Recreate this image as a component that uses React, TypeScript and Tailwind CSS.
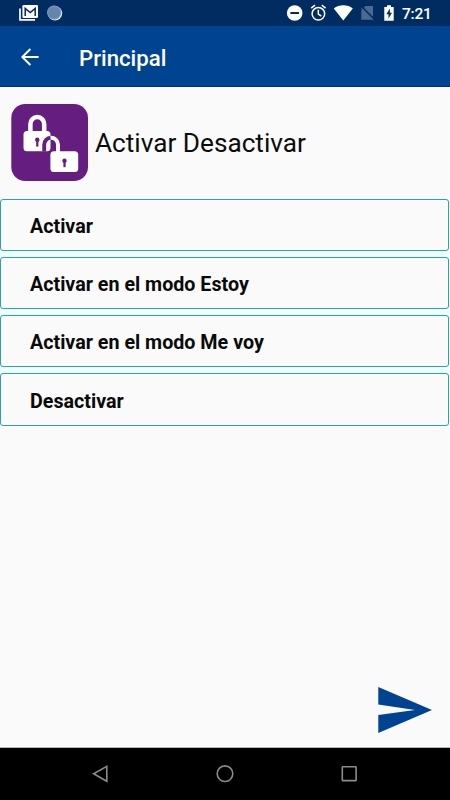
import React from "react";

const options = ["Activar", "Activar en el modo Estoy", "Activar en el modo Me voy", "Desactivar"];

function StatusBar() {
  return (
    <div className="h-[26px] shrink-0 bg-[#012c61]">
      <svg width="450" height="26" viewBox="0 0 450 26" className="block">
        <path d="M20 8.5V19.9H35" fill="none" stroke="#fff" strokeWidth="1.7" />
        <rect x="22.4" y="5" width="15.6" height="13" rx="1.2" fill="#fff" />
        <path d="M25.2 16V8.4L30.2 12.6L35.2 8.4V16" fill="none" stroke="#012c61" strokeWidth="1.5" />
        <circle cx="55" cy="13.3" r="7.2" fill="#d9e6f2" />
        <circle cx="54.1" cy="12.5" r="7" fill="#6585ab" />
        <circle cx="54.2" cy="12.6" r="6.5" fill="none" stroke="#9cb4cf" strokeWidth="1" strokeDasharray="1 1" />
        <circle cx="294.7" cy="13" r="7.8" fill="#fff" />
        <rect x="290.4" y="12" width="8.6" height="2" fill="#012c61" />
        <g fill="none" stroke="#fff" strokeWidth="1.5">
          <circle cx="318.4" cy="13.8" r="6.3" />
          <path d="M311.2 8.2L315 5.1M325.6 8.2L321.8 5.1M318.3 9.8V14.2L321.3 16" />
        </g>
        <path d="M343.3 20.6L333.8 8.6C339 4.2 347.6 4.2 352.8 8.6Z" fill="#fff" />
        <path d="M365.6 6H373V19.8H361.3V10.2Z" fill="#4c6a91" />
        <path d="M361.8 6.7L374.5 19.4" stroke="#012c61" strokeWidth="1.6" />
        <path d="M361 7.8L373.5 20.4" stroke="#4c6a91" strokeWidth="1" />
        <path d="M387 5.2H391V7H393.7V20.8H384.3V7H387Z" fill="#fff" />
        <path d="M389.9 8.6L386.3 14.2H388.5V18.4L392 12.7H389.9Z" fill="#012c61" />
        <text x="402" y="19" fontSize="15.5" fontWeight="500" fill="#fff" fontFamily="Roboto, sans-serif" textLength="29.8">7:21</text>
      </svg>
    </div>
  );
}

function Padlock() {
  return (
    <svg width="77" height="77" viewBox="11 104 77 77" className="block shrink-0">
      <rect x="11.3" y="104" width="76.7" height="77" rx="14" fill="#661d80" />
      <path d="M30.4 132V124A6.9 6.9 0 0 1 44.2 124V132" fill="none" stroke="#fff" strokeWidth="4.5" />
      <rect x="23.5" y="131" width="27" height="20.3" rx="3.5" fill="#fff" />
      <path d="M44.2 151.5V144.8A7 7 0 0 1 50.9 137.6" fill="none" stroke="#661d80" strokeWidth="3.9" />
      <path d="M50.5 137.7A7 7 0 0 1 58 144.8V152" fill="none" stroke="#fff" strokeWidth="3.9" />
      <rect x="49.7" y="150.3" width="29.2" height="22.4" rx="4" fill="#661d80" />
      <path d="M58 148V152" stroke="#fff" strokeWidth="3.9" />
      <rect x="50.4" y="151.2" width="27.8" height="20.7" rx="3.5" fill="#fff" />
      <g fill="#661d80">
        <circle cx="37.3" cy="139.8" r="2.2" />
        <rect x="36.2" y="140" width="2.2" height="6.6" />
        <circle cx="64.5" cy="160.8" r="2.2" />
        <rect x="63.4" y="161" width="2.2" height="6.2" />
      </g>
    </svg>
  );
}

export default function App() {
  return (
    <div className="flex h-[800px] w-[450px] flex-col overflow-hidden bg-[#fafafa] font-['Roboto',sans-serif]">
      <StatusBar />
      <header className="flex h-[61px] shrink-0 items-center border-b border-[#003070] bg-[#004391] pl-[20px] text-white">
        <svg width="20" height="18" viewBox="0 0 20 18" fill="none" stroke="#fff" strokeWidth="1.9" className="mt-px">
          <path d="M10.4 1L2.3 9L10.4 17M2.3 9H18.6" />
        </svg>
        <h1 className="ml-[39px] pt-[3px] text-[22.2px] font-medium leading-7">Principal</h1>
      </header>
      <div className="flex h-[111.5px] shrink-0 items-center pl-[11px]">
        <Padlock />
        <h2 className="ml-[7px] text-[26.2px] leading-8 text-[#0c0c0c]">Activar Desactivar</h2>
      </div>
      <div className="flex flex-col gap-[6px] bg-[#effdfd] pr-px">
        {options.map((option) => (
          <button key={option} className="flex h-[52.3px] items-center rounded-[3px] border border-[#2ba3ab] bg-[#fafafa] pl-[29px] pt-[4px] text-left text-[19.7px] font-bold text-[#0a0a0a]">
            {option}
          </button>
        ))}
      </div>
      <div className="flex flex-1 items-end justify-end pb-[14px] pr-[18px]">
        <svg width="54" height="46" viewBox="0 0 54 46" className="block">
          <path d="M0.3 0L54 23L0.3 46V28L37 23L0.3 17.6Z" fill="#004391" />
        </svg>
      </div>
      <nav className="h-[53px] shrink-0 border-t border-[#b5b5b5] bg-black">
        <svg width="450" height="52" viewBox="0 748 450 52" className="block" fill="none" stroke="#8b8b8b" strokeWidth="1.6">
          <path d="M106.8 766.3V781.3L93.6 773.8Z" />
          <circle cx="225" cy="773.7" r="7.8" />
          <rect x="342.3" y="766.8" width="13.8" height="13.8" rx=".5" />
        </svg>
      </nav>
    </div>
  );
}
